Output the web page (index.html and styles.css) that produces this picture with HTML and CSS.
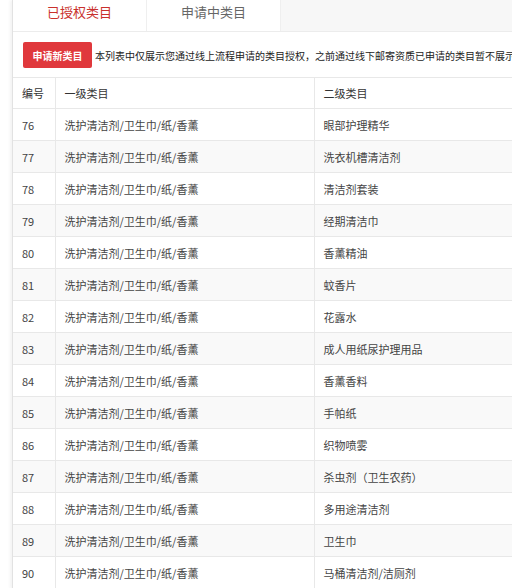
FILE: index.html
```html
<!DOCTYPE html>
<html lang="zh-CN">
<head>
<meta charset="utf-8">
<title>类目</title>
<link rel="stylesheet" href="styles.css">
</head>
<body>
<div class="page">
  <div class="tabs">
    <div class="tab active">已授权类目</div>
    <div class="tab">申请中类目</div>
    <div class="tab-rest"></div>
  </div>
  <div class="toolbar">
    <button class="btn-apply">申请新类目</button>
    <span class="note">本列表中仅展示您通过线上流程申请的类目授权，之前通过线下邮寄资质已申请的类目暂不展示</span>
  </div>
  <table class="grid">
    <colgroup>
      <col class="c-id">
      <col class="c-l1">
      <col class="c-l2">
    </colgroup>
    <thead>
      <tr><th>编号</th><th>一级类目</th><th>二级类目</th></tr>
    </thead>
    <tbody>
      <tr><td>76</td><td>洗护清洁剂/卫生巾/纸/香薰</td><td>眼部护理精华</td></tr>
      <tr><td>77</td><td>洗护清洁剂/卫生巾/纸/香薰</td><td>洗衣机槽清洁剂</td></tr>
      <tr><td>78</td><td>洗护清洁剂/卫生巾/纸/香薰</td><td>清洁剂套装</td></tr>
      <tr><td>79</td><td>洗护清洁剂/卫生巾/纸/香薰</td><td>经期清洁巾</td></tr>
      <tr><td>80</td><td>洗护清洁剂/卫生巾/纸/香薰</td><td>香薰精油</td></tr>
      <tr><td>81</td><td>洗护清洁剂/卫生巾/纸/香薰</td><td>蚊香片</td></tr>
      <tr><td>82</td><td>洗护清洁剂/卫生巾/纸/香薰</td><td>花露水</td></tr>
      <tr><td>83</td><td>洗护清洁剂/卫生巾/纸/香薰</td><td>成人用纸尿护理用品</td></tr>
      <tr><td>84</td><td>洗护清洁剂/卫生巾/纸/香薰</td><td>香薰香料</td></tr>
      <tr><td>85</td><td>洗护清洁剂/卫生巾/纸/香薰</td><td>手帕纸</td></tr>
      <tr><td>86</td><td>洗护清洁剂/卫生巾/纸/香薰</td><td>织物喷雾</td></tr>
      <tr><td>87</td><td>洗护清洁剂/卫生巾/纸/香薰</td><td>杀虫剂（卫生农药）</td></tr>
      <tr><td>88</td><td>洗护清洁剂/卫生巾/纸/香薰</td><td>多用途清洁剂</td></tr>
      <tr><td>89</td><td>洗护清洁剂/卫生巾/纸/香薰</td><td>卫生巾</td></tr>
      <tr><td>90</td><td>洗护清洁剂/卫生巾/纸/香薰</td><td>马桶清洁剂/洁厕剂</td></tr>
    </tbody>
  </table>
</div>
</body>
</html>
```

FILE: styles.css
```css
html, body {
  margin: 0;
  padding: 0;
  background: #ffffff;
  font-family: "Noto Sans CJK SC", "Microsoft YaHei", sans-serif;
  color: #333333;
  overflow: hidden;
}

.page {
  margin-left: 12px;
  border-left: 1px solid #e2e2e2;
  box-shadow: -2px 0 3px rgba(0, 0, 0, 0.05);
  min-height: 588px;
  overflow: hidden;
}

.tabs {
  display: flex;
  height: 31px;
  border-bottom: 1px solid #ececec;
}

.tab {
  width: 133px;
  background: #ffffff;
  color: #666666;
  font-size: 13px;
  line-height: 23px;
  text-align: center;
  border-right: 1px solid #efefef;
}

.tab.active {
  color: #c9302c;
}

.tab-rest {
  flex: 1;
  background: #f7f7f7;
}

.toolbar {
  display: flex;
  align-items: center;
  gap: 3px;
  padding: 10px 0 9px 10px;
  white-space: nowrap;
}

.btn-apply {
  flex: none;
  width: 69px;
  height: 26px;
  padding: 0;
  border: none;
  border-radius: 2px;
  background: #e0383c;
  color: #ffffff;
  font-family: inherit;
  font-size: 10px;
  font-weight: bold;
}

.note {
  font-size: 10px;
  color: #222222;
}

.grid {
  width: 720px;
  border-collapse: collapse;
  table-layout: fixed;
  font-size: 11px;
}

.c-id { width: 42px; }
.c-l1 { width: 259px; }
.c-l2 { width: 419px; }

.grid th,
.grid td {
  border: 1px solid #e8e8e8;
  padding: 0 0 0 9px;
  text-align: left;
  vertical-align: middle;
  white-space: nowrap;
}

.grid tr > :first-child {
  border-left: none;
}

.grid th {
  height: 30px;
  font-weight: normal;
  color: #333333;
}

.grid td {
  height: 31px;
  color: #444444;
}

.grid tbody tr:nth-child(even) td {
  background: #f9f9f9;
}
```
